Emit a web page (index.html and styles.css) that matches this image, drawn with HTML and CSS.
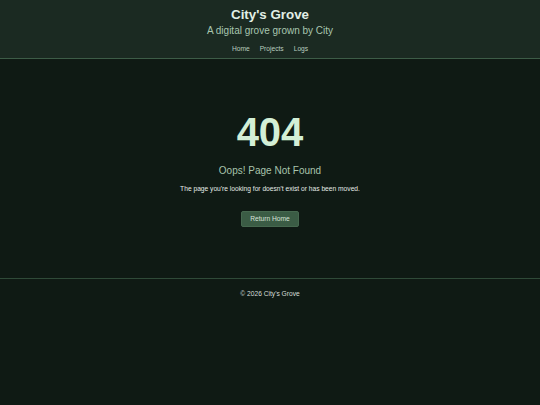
FILE: index.html
```html
<!DOCTYPE html>
<html>
<head>
<meta charset="utf-8">
<link rel="stylesheet" href="styles.css">
</head>
<body>
<header class="site-header">
  <h1 class="site-title">City's Grove</h1>
  <p class="site-tagline">A digital grove grown by City</p>
  <nav class="site-nav">
    <a href="#">Home</a>
    <a href="#">Projects</a>
    <a href="#">Logs</a>
  </nav>
</header>
<main class="not-found">
  <div class="code">404</div>
  <h2 class="heading">Oops! Page Not Found</h2>
  <p class="message">The page you're looking for doesn't exist or has been moved.</p>
  <a class="btn" href="#">Return Home</a>
</main>
<footer class="site-footer">
  <p>&copy; 2026 City's Grove</p>
</footer>
</body>
</html>
```
FILE: styles.css
```css
html, body {
  margin: 0;
  padding: 0;
  background: #0f1a14;
  font-family: "Liberation Sans", Arial, sans-serif;
  color: #e0e8e2;
}
.site-header {
  background: #1b2a22;
  border-bottom: 1px solid #3d5c47;
  padding: 7px 0 5px;
  text-align: center;
}
.site-title {
  margin: 0;
  font-size: 13.33px;
  line-height: 16px;
  font-weight: bold;
  color: #e2efe6;
}
.site-tagline {
  margin: 1px 0 0;
  font-size: 10px;
  line-height: 14px;
  color: #a8c6b0;
}
.site-nav {
  margin-top: 6px;
  display: flex;
  justify-content: center;
  gap: 10px;
  font-size: 6.67px;
  line-height: 9px;
}
.site-nav a {
  color: #b9cdbf;
  text-decoration: none;
}
.not-found {
  height: 219px;
  box-sizing: border-box;
  padding-top: 52px;
  display: flex;
  flex-direction: column;
  align-items: center;
  text-align: center;
}
.code {
  font-size: 40px;
  line-height: 42px;
  font-weight: bold;
  color: #d3efd6;
}
.heading {
  margin: 11px 0 0;
  font-size: 10px;
  line-height: 13px;
  font-weight: normal;
  color: #a8c4ac;
}
.message {
  margin: 7px 0 0;
  font-size: 6.67px;
  line-height: 9px;
  color: #e6ece8;
}
.btn {
  margin-top: 18px;
  display: block;
  width: 58px;
  height: 16px;
  line-height: 14px;
  box-sizing: border-box;
  background: #3b5c45;
  border: 1px solid #46684f;
  border-radius: 2px;
  color: #d6e2d9;
  text-decoration: none;
  font-size: 6.67px;
}
.site-footer {
  border-top: 1px solid #2f4a38;
  text-align: center;
  padding-top: 10px;
}
.site-footer p {
  margin: 0;
  font-size: 6.67px;
  line-height: 9px;
  color: #d6ded9;
}
```
